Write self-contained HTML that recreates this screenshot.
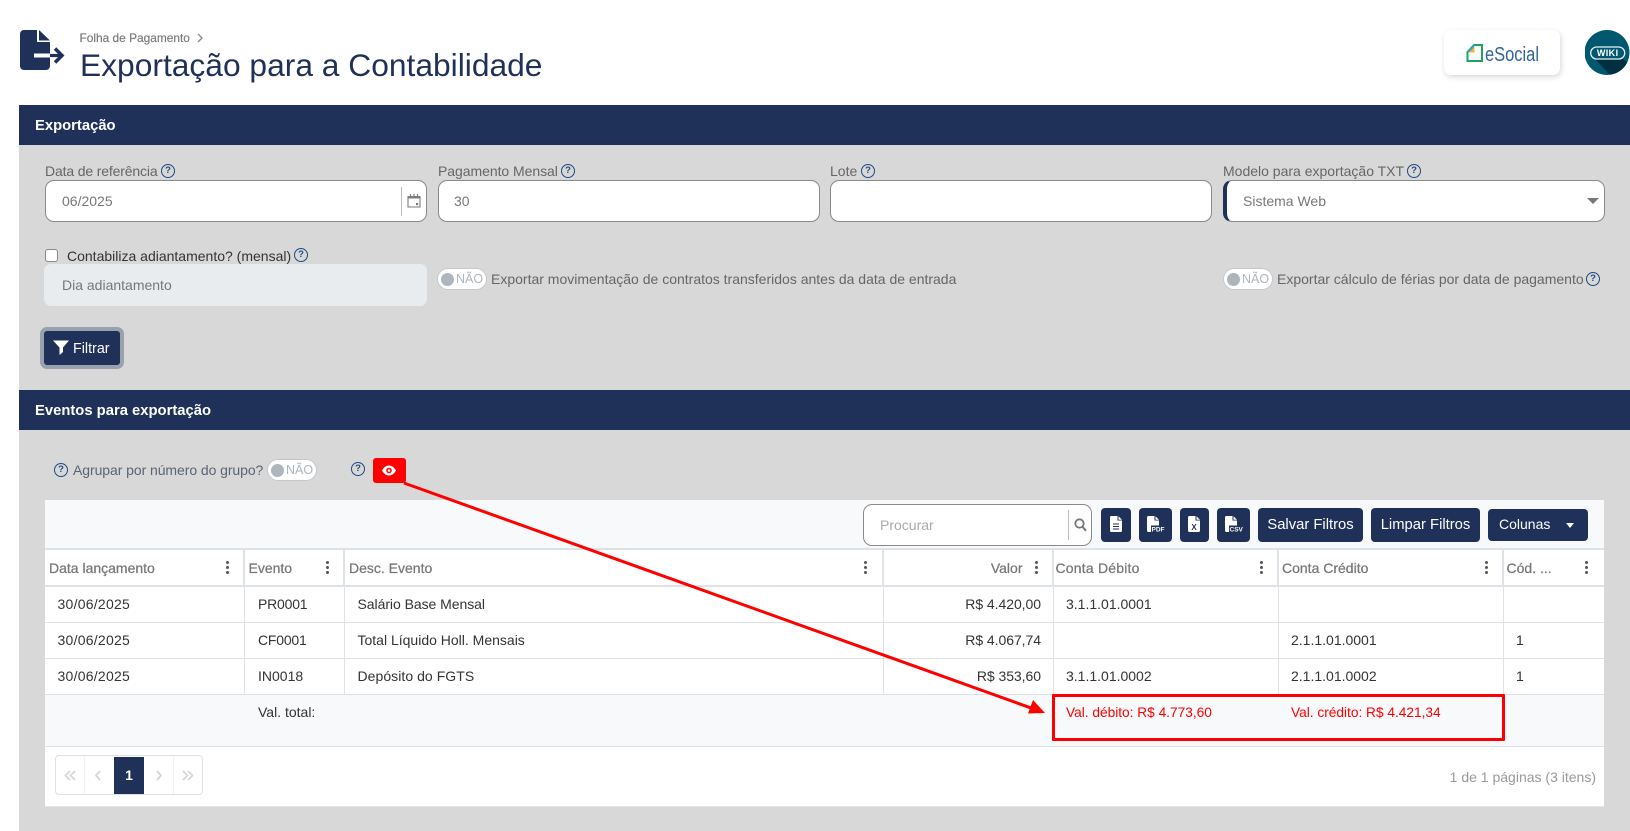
<!DOCTYPE html>
<html lang="pt-BR">
<head>
<meta charset="utf-8">
<title>Exportação para a Contabilidade</title>
<style>
html,body{margin:0;padding:0;width:1630px;height:831px;overflow:hidden;background:#fff;font-family:"Liberation Sans",sans-serif;font-size:14px;color:#333}
*{box-sizing:border-box}
.a{position:absolute}
.t{position:absolute;white-space:nowrap;line-height:20px;height:20px}
.bar{position:absolute;left:19px;width:1611px;height:40px;background:#1f3059}
.sec{position:absolute;left:35px;color:#fff;font-weight:bold;font-size:14.8px;line-height:20px;white-space:nowrap}
.lab{color:#666;font-size:14px}
.inp{position:absolute;height:42px;width:382px;top:180px;background:#fff;border:1px solid #8a8a8a;border-radius:9px}
.val{color:#777;font-size:14px}
.h{position:absolute;width:14px;height:14px;border:1.3px solid #1f4a80;border-radius:50%;color:#1f4a80;font-size:9.5px;font-weight:bold;line-height:11.5px;text-align:center;background:transparent}
.tg{position:absolute;width:50px;height:22px;background:#fff;border:1px solid #c4c8cc;border-radius:11px}
.tg i{position:absolute;left:3px;top:3.5px;width:13px;height:13px;border-radius:50%;background:#adb5bd}
.tg b{position:absolute;left:18px;top:0;font-weight:normal;font-size:12.5px;line-height:20px;color:#adb5bd}
.btn{position:absolute;background:#1f3059;border-radius:4px;top:508px;height:34px;color:#fff;font-size:14.8px;line-height:34px;text-align:center;white-space:nowrap}
.line{position:absolute;background:#dee2e6}
.hd{color:#777;font-size:14px;-webkit-text-stroke:.25px #777}
.dots{position:absolute;width:3px;top:561px;height:13px}
.dots i{position:absolute;left:0;width:3px;height:3px;border-radius:50%;background:#555}
.pg{position:absolute;top:765px;width:20px;text-align:center;line-height:20px}
.red{color:#f00;font-size:13.7px}
.dt{letter-spacing:.35px}
</style>
</head>
<body>

<!-- Header icon -->
<svg class="a" style="left:19px;top:30px" width="46" height="42" viewBox="0 0 46 42">
<path d="M5 0H18V12H31V36a4 4 0 0 1-4 4H5a4 4 0 0 1-4-4V4a4 4 0 0 1 4-4Z" fill="#1f3059"/>
<path d="M20 0L31 10.500H20Z" fill="#1f3059"/>
<rect x="15" y="23.500" width="16" height="4" fill="#fff"/>
<path d="M31 25.500H43" stroke="#1f3059" stroke-width="3.200"/>
<path d="M36 18.500l7 7-7 7" fill="none" stroke="#1f3059" stroke-width="3.500"/>
</svg>
<div class="t" style="left:79.500px;top:28px;font-size:11.9px;color:#777;-webkit-text-stroke:.15px #777">Folha de Pagamento</div>
<svg class="a" style="left:196px;top:33px" width="8" height="10"><path d="M2 1l4 4-4 4" fill="none" stroke="#888" stroke-width="1.300"/></svg>
<div class="t" style="left:80px;top:46px;height:38px;line-height:38px;font-size:31.75px;color:#1f3059">Exportação para a Contabilidade</div>

<!-- eSocial -->
<div class="a" style="left:1444px;top:30px;width:116px;height:45px;background:#fff;border-radius:7px;box-shadow:1px 2px 6px rgba(0,0,0,.16)"></div>
<svg class="a" style="left:1466px;top:44px" width="76" height="20" viewBox="0 0 76 20">
<path d="M8 1H16V17H1.500V8Z" fill="#f6fbf7" stroke="#21a35f" stroke-width="2"/>
<path d="M8 .5V8H1Z" fill="#2ea6de"/><path d="M8.500 3V8.500H3Z" fill="#f5b81f"/>
<text x="19" y="17" font-family="Liberation Sans" font-size="20" fill="#2f639c" textLength="54" lengthAdjust="spacingAndGlyphs">eSocial</text>
</svg>

<!-- Wiki -->
<svg class="a" style="left:1585px;top:30px" width="45" height="45" viewBox="0 0 45 45">
<defs><clipPath id="wc"><circle cx="22" cy="22.500" r="22.500"/></clipPath></defs>
<circle cx="22" cy="22.500" r="22.500" fill="#00586f"/>
<path d="M10 29H38L46 35V46H26Z" fill="#012f42" clip-path="url(#wc)"/>
<rect x="5.700" y="17" width="34" height="12" rx="6" fill="#00586f" stroke="#e8f2f4" stroke-width="1.300"/>
<text x="22.700" y="26.200" text-anchor="middle" font-family="Liberation Sans" font-weight="bold" font-size="9" letter-spacing=".4" fill="#fff">WIKI</text>
</svg>

<!-- Gray background -->
<div class="a" style="left:19px;top:145px;width:1611px;height:686px;background:#d8d8d8"></div>

<!-- Section 1 -->
<div class="bar" style="top:105px"></div>
<div class="sec" style="top:116px">Exportação</div>

<div class="t lab" style="left:45px;top:161px;letter-spacing:-.15px">Data de referência</div><span class="h" style="left:161px;top:164px">?</span>
<div class="t lab" style="left:438px;top:161px;letter-spacing:-.05px">Pagamento Mensal</div><span class="h" style="left:561px;top:164px">?</span>
<div class="t lab" style="left:830px;top:161px">Lote</div><span class="h" style="left:861px;top:164px">?</span>
<div class="t lab" style="left:1223px;top:161px">Modelo para exportação TXT</div><span class="h" style="left:1407px;top:164px">?</span>

<div class="inp" style="left:45px"></div>
<div class="t val" style="left:62px;top:191px">06/2025</div>
<div class="a" style="left:401px;top:187px;width:1px;height:29px;background:#bbb"></div>
<svg class="a" style="left:407px;top:193px" width="14" height="15" viewBox="0 0 14 15">
<path d="M1 3.500H13V14H1Z" fill="#fff" stroke="#7d7d7d" stroke-width="1.100"/><path d="M1 3H13V5.500H1Z" fill="#7d7d7d"/>
<path d="M3.500 1V3M7 1V3M10.500 1V3" stroke="#7d7d7d" stroke-width="1.200"/><rect x="9" y="10" width="2.200" height="2.200" fill="#7d7d7d"/>
</svg>
<div class="inp" style="left:438px"></div>
<div class="t val" style="left:454px;top:191px">30</div>
<div class="inp" style="left:830px"></div>
<div class="inp" style="left:1223px;border-left:4px solid #1f3059"></div>
<div class="t val" style="left:1243px;top:191px">Sistema Web</div>
<div class="a" style="left:1586.500px;top:198px;width:0;height:0;border-left:6px solid transparent;border-right:6px solid transparent;border-top:6px solid #777"></div>

<div class="a" style="left:45px;top:249px;width:13px;height:13px;background:#fff;border:1px solid #8a8a8a;border-radius:3px"></div>
<div class="t" style="left:67px;top:246px;color:#333">Contabiliza adiantamento? (mensal)</div><span class="h" style="left:294px;top:248px">?</span>
<div class="a" style="left:44px;top:264px;width:383px;height:42px;background:#e9ecef;border-radius:7px"></div>
<div class="t val" style="left:62px;top:275px">Dia adiantamento</div>

<div class="tg" style="left:437px;top:268px"><i></i><b>NÃO</b></div>
<div class="t lab" style="left:491px;top:269px">Exportar movimentação de contratos transferidos antes da data de entrada</div>
<div class="tg" style="left:1223px;top:268px"><i></i><b>NÃO</b></div>
<div class="t lab" style="left:1277px;top:269px">Exportar cálculo de férias por data de pagamento</div><span class="h" style="left:1586px;top:272px">?</span>

<div class="a" style="left:40px;top:327px;width:84px;height:42px;background:#1f3059;border:4px solid #9aa1ae;border-radius:7px"></div>
<svg class="a" style="left:53px;top:340px" width="16" height="15" viewBox="0 0 16 15"><path d="M0 .5H16L10 7.500V12L6.500 15V7.500Z" fill="#fff"/></svg>
<div class="t" style="left:73px;top:339px;color:#fff;font-size:14.3px">Filtrar</div>

<!-- Section 2 -->
<div class="bar" style="top:390px"></div>
<div class="sec" style="top:401px">Eventos para exportação</div>

<span class="h" style="left:54px;top:463px">?</span>
<div class="t" style="left:73px;top:460px;color:#5a6472;font-size:14px;letter-spacing:-.07px">Agrupar por número do grupo?</div>
<div class="tg" style="left:267px;top:459px"><i></i><b>NÃO</b></div>
<span class="h" style="left:351px;top:462px">?</span>
<div class="a" style="left:373px;top:458px;width:33px;height:25px;background:#f00;border-radius:3px"></div>
<svg class="a" style="left:382px;top:465px" width="14" height="11" viewBox="0 0 14 11"><path d="M0 5.500C2 2 4.500 .5 7 .5s5 1.500 7 5c-2 3.500-4.500 5-7 5s-5-1.500-7-5Z" fill="#fff"/><circle cx="7" cy="5.500" r="2.800" fill="#f00"/><circle cx="7" cy="5.500" r="1.300" fill="#fff"/></svg>

<!-- Table panel -->
<div class="a" style="left:45px;top:500px;width:1559px;height:306px;background:#fff;box-shadow:0 1px 0 #e2e4e7"></div>
<div class="a" style="left:45px;top:500px;width:1559px;height:49px;background:#f8f9fa"></div>
<div class="a" style="left:45px;top:694px;width:1559px;height:52px;background:#f8f9fa"></div>

<!-- toolbar -->
<div class="a" style="left:863px;top:504px;width:229px;height:42px;background:#fff;border:1px solid #8a8a8a;border-radius:9px"></div>
<div class="t" style="left:880px;top:515px;color:#aaa;font-size:14px">Procurar</div>
<div class="a" style="left:1068px;top:510px;width:1px;height:30px;background:#bbb"></div>
<svg class="a" style="left:1074px;top:518px" width="13" height="14" viewBox="0 0 13 14"><circle cx="5.500" cy="5.500" r="4.200" fill="none" stroke="#777" stroke-width="1.800"/><path d="M8.500 8.800L12 12.800" stroke="#777" stroke-width="2"/></svg>

<div class="btn" style="left:1101px;width:30px"></div>
<svg class="a" style="left:1110px;top:516px" width="12" height="16" viewBox="0 0 12 16"><path d="M0 1.500A1.500 1.500 0 0 1 1.500 0H7.500V4.500H12V14.500A1.500 1.500 0 0 1 10.500 16H1.500A1.500 1.500 0 0 1 0 14.500Z" fill="#fff"/><path d="M8.500 .3L12 3.800H8.500Z" fill="#fff"/><path d="M3 8H9M3 10.500H9M3 13H9" stroke="#1f3059" stroke-width="1"/></svg>

<div class="btn" style="left:1139px;width:33px"></div>
<svg class="a" style="left:1146px;top:516px" width="20" height="17" viewBox="0 0 20 17"><path d="M1 1.500A1.500 1.500 0 0 1 2.500 0H8.500V4.500H13V14.500A1.500 1.500 0 0 1 11.500 16H2.500A1.500 1.500 0 0 1 1 14.500Z" fill="#fff"/><path d="M9.500 .3L13 3.800H9.500Z" fill="#fff"/><rect x="5" y="9.500" width="15" height="7" fill="#1f3059"/><text x="5.500" y="15.500" font-family="Liberation Sans" font-weight="bold" font-size="6.500" fill="#fff">PDF</text></svg>

<div class="btn" style="left:1180px;width:29px"></div>
<svg class="a" style="left:1188px;top:516px" width="12" height="16" viewBox="0 0 12 16"><path d="M0 1.500A1.500 1.500 0 0 1 1.500 0H7.500V4.500H12V14.500A1.500 1.500 0 0 1 10.500 16H1.500A1.500 1.500 0 0 1 0 14.500Z" fill="#fff"/><path d="M8.500 .3L12 3.800H8.500Z" fill="#fff"/><text x="6" y="14" text-anchor="middle" font-family="Liberation Sans" font-weight="bold" font-size="8" fill="#1f3059">X</text></svg>

<div class="btn" style="left:1217px;width:33px"></div>
<svg class="a" style="left:1224px;top:516px" width="20" height="17" viewBox="0 0 20 17"><path d="M1 1.500A1.500 1.500 0 0 1 2.500 0H8.500V4.500H13V14.500A1.500 1.500 0 0 1 11.500 16H2.500A1.500 1.500 0 0 1 1 14.500Z" fill="#fff"/><path d="M9.500 .3L13 3.800H9.500Z" fill="#fff"/><rect x="5" y="9.500" width="15" height="7" fill="#1f3059"/><text x="5.500" y="15.500" font-family="Liberation Sans" font-weight="bold" font-size="6.500" fill="#fff">CSV</text></svg>

<div class="btn" style="left:1258px;width:105px">Salvar Filtros</div>
<div class="btn" style="left:1371px;width:109px">Limpar Filtros</div>
<div class="btn" style="left:1488px;width:100px;top:509px;height:32px;line-height:30px;text-align:left;padding-left:11px;font-size:14px">Colunas</div>
<div class="a" style="left:1566px;top:523px;width:0;height:0;border-left:4.500px solid transparent;border-right:4.500px solid transparent;border-top:5px solid #fff"></div>

<!-- table lines -->
<div class="line" style="left:45px;top:548px;width:1559px;height:2px"></div>
<div class="line" style="left:45px;top:585px;width:1559px;height:2px"></div>
<div class="line" style="left:45px;top:622px;width:1559px;height:1px"></div>
<div class="line" style="left:45px;top:658px;width:1559px;height:1px"></div>
<div class="line" style="left:45px;top:694px;width:1559px;height:1px"></div>
<div class="line" style="left:45px;top:746px;width:1559px;height:1px"></div>
<div class="line" style="left:243px;top:549px;width:2px;height:37px"></div>
<div class="line" style="left:343px;top:549px;width:2px;height:37px"></div>
<div class="line" style="left:882px;top:549px;width:2px;height:37px"></div>
<div class="line" style="left:1052px;top:549px;width:2px;height:37px"></div>
<div class="line" style="left:1277px;top:549px;width:2px;height:37px"></div>
<div class="line" style="left:1502px;top:549px;width:2px;height:37px"></div>
<div class="line" style="left:244px;top:586px;width:1px;height:108px"></div>
<div class="line" style="left:344px;top:586px;width:1px;height:108px"></div>
<div class="line" style="left:883px;top:586px;width:1px;height:108px"></div>
<div class="line" style="left:1053px;top:586px;width:1px;height:108px"></div>
<div class="line" style="left:1278px;top:586px;width:1px;height:108px"></div>
<div class="line" style="left:1503px;top:586px;width:1px;height:108px"></div>

<!-- head -->
<div class="t hd" style="left:49px;top:558px">Data lançamento</div>
<div class="t hd" style="left:248.500px;top:558px">Evento</div>
<div class="t hd" style="left:349px;top:558px">Desc. Evento</div>
<div class="t hd" style="left:922.500px;top:558px;width:100px;text-align:right">Valor</div>
<div class="t hd" style="left:1055.500px;top:558px;letter-spacing:.2px">Conta Débito</div>
<div class="t hd" style="left:1282px;top:558px">Conta Crédito</div>
<div class="t hd" style="left:1506.500px;top:558px">Cód. ...</div>
<div class="dots" style="left:226px"><i style="top:0"></i><i style="top:5px"></i><i style="top:10px"></i></div>
<div class="dots" style="left:326px"><i style="top:0"></i><i style="top:5px"></i><i style="top:10px"></i></div>
<div class="dots" style="left:864px"><i style="top:0"></i><i style="top:5px"></i><i style="top:10px"></i></div>
<div class="dots" style="left:1035px"><i style="top:0"></i><i style="top:5px"></i><i style="top:10px"></i></div>
<div class="dots" style="left:1260px"><i style="top:0"></i><i style="top:5px"></i><i style="top:10px"></i></div>
<div class="dots" style="left:1485px"><i style="top:0"></i><i style="top:5px"></i><i style="top:10px"></i></div>
<div class="dots" style="left:1585px"><i style="top:0"></i><i style="top:5px"></i><i style="top:10px"></i></div>

<!-- rows -->
<div class="t dt" style="left:57.500px;top:594px;letter-spacing:.25px">30/06/2025</div>
<div class="t" style="left:258px;top:594px;letter-spacing:-.2px">PR0001</div>
<div class="t" style="left:357.500px;top:594px;letter-spacing:-.05px">Salário Base Mensal</div>
<div class="t" style="left:911px;top:594px;width:130px;text-align:right;letter-spacing:-.05px">R$ 4.420,00</div>
<div class="t" style="left:1066px;top:594px">3.1.1.01.0001</div>

<div class="t dt" style="left:57.500px;top:630px;letter-spacing:.25px">30/06/2025</div>
<div class="t" style="left:258px;top:630px;letter-spacing:-.2px">CF0001</div>
<div class="t" style="left:357.500px;top:630px">Total Líquido Holl. Mensais</div>
<div class="t" style="left:911px;top:630px;width:130px;text-align:right;letter-spacing:-.05px">R$ 4.067,74</div>
<div class="t" style="left:1291px;top:630px">2.1.1.01.0001</div>
<div class="t" style="left:1516px;top:630px">1</div>

<div class="t dt" style="left:57.500px;top:666px;letter-spacing:.25px">30/06/2025</div>
<div class="t" style="left:258px;top:666px">IN0018</div>
<div class="t" style="left:357.500px;top:666px;letter-spacing:.05px">Depósito do FGTS</div>
<div class="t" style="left:911px;top:666px;width:130px;text-align:right;letter-spacing:-.05px">R$ 353,60</div>
<div class="t" style="left:1066px;top:666px">3.1.1.01.0002</div>
<div class="t" style="left:1291px;top:666px">2.1.1.01.0002</div>
<div class="t" style="left:1516px;top:666px">1</div>

<!-- totals -->
<div class="t" style="left:258px;top:702px">Val. total:</div>
<div class="t red" style="left:1066px;top:703px">Val. débito: R$ 4.773,60</div>
<div class="t red" style="left:1291px;top:703px">Val. crédito: R$ 4.421,34</div>
<div class="a" style="left:1052px;top:694px;width:453px;height:47px;border:3px solid #f00;border-radius:1px"></div>

<!-- arrow -->
<svg class="a" style="left:0;top:0" width="1630" height="831"><path d="M404 483L1033 708.700" stroke="#f00" stroke-width="3" fill="none"/><path d="M1045 713L1028 713.500L1033 700Z" fill="#f00"/></svg>

<!-- pagination -->
<div class="a" style="left:55px;top:755px;width:148px;height:40px;background:#fff;border:1px solid #dee2e6;border-radius:4px"></div>
<div class="a" style="left:84px;top:756px;width:1px;height:38px;background:#eef0f2"></div>
<div class="a" style="left:173px;top:756px;width:1px;height:38px;background:#eef0f2"></div>
<div class="a" style="left:114px;top:757px;width:30px;height:37px;background:#1f3059"></div>
<svg class="a" style="left:0;top:0" width="210" height="800"><path d="M70 771l-4.500 4.500 4.500 4.500M75 771l-4.500 4.500 4.500 4.500M100 771l-4 4.500 4 4.500M157 771l4 4.500-4 4.500M183 771l4.500 4.500-4.500 4.500M188 771l4.500 4.500-4.500 4.500" fill="none" stroke="#d6d6d6" stroke-width="1.800"/></svg>
<div class="pg" style="left:119px;color:#fff;font-weight:bold;font-size:14px">1</div>
<div class="t" style="left:1396px;top:767px;width:200px;text-align:right;color:#999;font-size:14px">1 de 1 páginas (3 itens)</div>

</body>
</html>
